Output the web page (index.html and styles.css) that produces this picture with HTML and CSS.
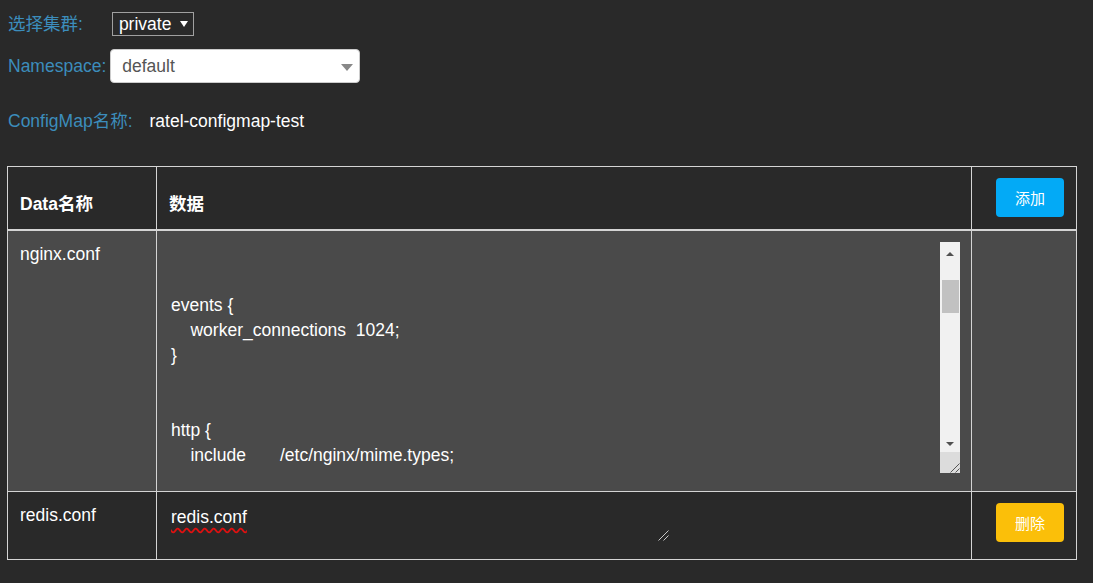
FILE: index.html
```html
<!DOCTYPE html>
<html lang="zh">
<head>
<meta charset="utf-8">
<title>ConfigMap</title>
<link rel="stylesheet" href="styles.css">
</head>
<body>
<div class="page">
  <div class="form-row row-cluster">
    <label class="label label-cluster">选择集群:</label>
    <span class="cluster-select">private<i class="caret-white"></i></span>
  </div>
  <div class="form-row row-ns">
    <label class="label label-ns">Namespace:</label>
    <span class="ns-select">default<i class="caret-gray"></i></span>
  </div>
  <div class="form-row row-name">
    <label class="label label-name">ConfigMap名称:</label>
    <span class="name-value">ratel-configmap-test</span>
  </div>
  <table class="data-table">
    <colgroup><col class="c1"><col class="c2"><col class="c3"></colgroup>
    <thead>
      <tr><th>Data名称</th><th>数据</th><th class="actions"><button class="btn btn-add">添加</button></th></tr>
    </thead>
    <tbody>
      <tr class="row-light">
        <td class="key">nginx.conf</td>
        <td class="val">
          <div class="code-wrap">
<textarea class="code code-big" spellcheck="false">user  nginx;
worker_processes  1;

error_log  /var/log/nginx/error.log warn;
pid        /var/run/nginx.pid;


events {
    worker_connections  1024;
}


http {
    include       /etc/nginx/mime.types;
    default_type  application/octet-stream;

    log_format  main  '$remote_addr - $remote_user [$time_local] "$request" '
                      '$status $body_bytes_sent "$http_referer" '
                      '"$http_user_agent" "$http_x_forwarded_for"';

    access_log  /var/log/nginx/access.log  main;

    sendfile        on;
    #tcp_nopush     on;

    keepalive_timeout  65;

    #gzip  on;

    server {
        listen       80;
        server_name  localhost;

        location / {
            root   /usr/share/nginx/html;
            index  index.html index.htm;
        }

        error_page   500 502 503 504  /50x.html;
        location = /50x.html {
            root   /usr/share/nginx/html;
        }
    }

    include /etc/nginx/conf.d/*.conf;
}</textarea>
            <div class="fake-scroll" aria-hidden="true">
              <div class="sb-btn"><i class="arrow-up"></i></div>
              <div class="sb-track"><div class="sb-thumb"></div></div>
              <div class="sb-btn"><i class="arrow-down"></i></div>
              <div class="sb-corner">
                <svg width="20" height="21" viewBox="0 0 20 21"><path d="M10.5 20.5L19.5 11.5M15.5 20.5L19.5 16.5" stroke="#555" stroke-width="1" fill="none"/></svg>
              </div>
            </div>
          </div>
        </td>
        <td class="actions"></td>
      </tr>
      <tr class="row-dark">
        <td class="key">redis.conf</td>
        <td class="val"><textarea class="code code-small" spellcheck="false">redis.conf</textarea></td>
        <td class="actions"><button class="btn btn-del">删除</button></td>
      </tr>
    </tbody>
  </table>
</div>
<script src="script.js"></script>
</body>
</html>
```

FILE: styles.css
```css
html, body {
  margin: 0;
  padding: 0;
  background: #292929;
}
body {
  font-family: "Liberation Sans", "Noto Sans CJK SC", sans-serif;
  font-size: 17.5px;
  line-height: 25px;
  color: #ffffff;
}
.page {
  padding: 12px 7px 0 7px;
}
.form-row {
  display: flex;
  align-items: center;
}
.label {
  color: #3c8dbc;
  margin-left: 1px;
}
.row-cluster { height: 24px; }
.label-cluster { margin-right: 29px; }
.cluster-select {
  box-sizing: border-box;
  height: 24px;
  width: 82px;
  border: 1px solid #a0a0a0;
  padding: 0 0 0 6px;
  display: flex;
  align-items: center;
  color: #ffffff;
}
.caret-white {
  display: block;
  width: 0;
  height: 0;
  margin-left: 9px;
  border-left: 4px solid transparent;
  border-right: 4px solid transparent;
  border-top: 6px solid #ffffff;
}
.row-ns {
  margin-top: 13px;
  height: 34px;
}
.label-ns { margin-right: 4px; }
.ns-select {
  box-sizing: border-box;
  position: relative;
  width: 250px;
  height: 34px;
  background: #ffffff;
  border: 1px solid #cccccc;
  border-radius: 4px;
  color: #555555;
  padding-left: 11px;
  display: flex;
  align-items: center;
}
.caret-gray {
  position: absolute;
  right: 6px;
  top: 14px;
  width: 0;
  height: 0;
  border-left: 6px solid transparent;
  border-right: 6px solid transparent;
  border-top: 7px solid #888888;
}
.row-name {
  margin-top: 26px;
  height: 25px;
}
.label-name { margin-right: 17px; }
.name-value { color: #ffffff; }

.data-table {
  margin-top: 32px;
  width: 1069px;
  table-layout: fixed;
  border-collapse: collapse;
  border: 1px solid #d4d4d4;
}
.c1 { width: 149px; }
.c2 { width: 815px; }
.c3 { width: 105px; }
.data-table th,
.data-table td {
  border: 1px solid #d4d4d4;
  padding: 11px 12px 18px 12px;
  text-align: left;
}
.data-table th {
  font-weight: bold;
  vertical-align: bottom;
  padding-bottom: 12px;
  border-bottom: 2px solid #d4d4d4;
}
.data-table td { vertical-align: top; }
.data-table th.actions,
.data-table td.actions {
  text-align: right;
  padding-bottom: 12px;
}
.row-light td { background: #4a4a4a; }
.row-dark td { background: #292929; }

.btn {
  display: inline-block;
  width: 68px;
  height: 39px;
  border: 0;
  border-radius: 4px;
  color: #ffffff;
  font-family: "Noto Sans CJK SC", "Liberation Sans", sans-serif;
  font-size: 15px;
  line-height: 39px;
  padding: 0;
  vertical-align: top;
}
.btn-add { background: #03aaf6; }
.btn-del { background: #fbbf09; }

.code {
  display: block;
  box-sizing: border-box;
  margin: 0;
  border: 0;
  outline: none;
  padding: 2px;
  font-family: "Liberation Sans", "Noto Sans CJK SC", sans-serif;
  font-size: 17.5px;
  line-height: 25px;
  color: #ffffff;
  background: transparent;
}
.code-wrap {
  position: relative;
  width: 791px;
  height: 231px;
}
.code-big {
  width: 100%;
  height: 231px;
  padding-right: 22px;
  overflow-y: scroll;
  resize: none;
  scrollbar-width: none;
}
.code-big::-webkit-scrollbar { display: none; }

.fake-scroll {
  position: absolute;
  top: 0;
  right: 0;
  width: 20px;
  height: 231px;
  background: #f1f1f1;
  display: flex;
  flex-direction: column;
}
.sb-btn {
  height: 17px;
  display: flex;
  align-items: center;
  justify-content: center;
}
.sb-track {
  flex: 1;
  display: flex;
  flex-direction: column;
}
.sb-thumb {
  margin: 21px 1px 0 2px;
  height: 33px;
  background: #c1c1c1;
}
.arrow-up {
  display: block;
  width: 0;
  height: 0;
  border-left: 4px solid transparent;
  border-right: 4px solid transparent;
  border-bottom: 4px solid #505050;
  margin-top: 6px;
}
.arrow-down {
  display: block;
  width: 0;
  height: 0;
  border-left: 4px solid transparent;
  border-right: 4px solid transparent;
  border-top: 4px solid #505050;
}
.sb-corner {
  height: 21px;
  background: #dcdcdc;
}
.sb-corner svg { display: block; }

.code-small {
  width: 500px;
  height: 38px;
  overflow: hidden;
  resize: vertical;
  text-decoration: underline wavy #e01010;
  text-decoration-skip-ink: none;
  text-underline-offset: 4px;
}
.code-small::-webkit-resizer {
  background-color: transparent;
  background-image: url("data:image/svg+xml,%3Csvg xmlns='http://www.w3.org/2000/svg' width='12' height='12'%3E%3Cpath d='M1.5 11.5L11.5 1.5M6.5 11.5L11.5 6.5' stroke='%23c8c8c8' stroke-width='1'/%3E%3C/svg%3E");
  background-repeat: no-repeat;
  background-position: right bottom;
}
```

FILE: script.js
```js
var big = document.querySelector('.code-big');
if (big) { big.scrollTop = 126; }
```
